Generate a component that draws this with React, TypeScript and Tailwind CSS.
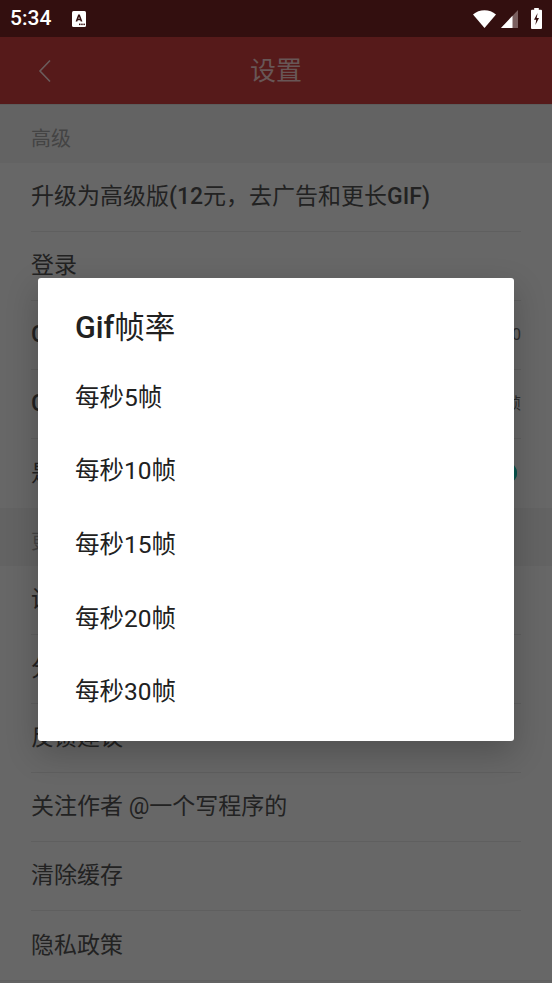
import React from 'react';

const FONT = "font-['Roboto','Noto_Sans_CJK_SC',sans-serif]";

// Rows of the settings page behind the dialog
function Row({ label, value, last, toggle }: { label: React.ReactNode; value?: string; last?: boolean; toggle?: boolean }) {
  return (
    <div className={`mx-[31px] h-[69px] flex items-center justify-between pb-[1px] ${last ? '' : 'border-b border-[#5f5f5f]'}`}>
      <span className="text-[23px] leading-none text-[#222222]">{label}</span>
      {value && <span className="text-[16px] text-[#2c2c2c]">{value}</span>}
      {toggle && (
        <span className="relative w-[44px] h-[20px] rounded-full bg-[#0a4d48] mr-[4px]">
          <span className="absolute right-0 top-[-1px] w-[22px] h-[22px] rounded-full bg-[#06544d]" />
        </span>
      )}
    </div>
  );
}

function SectionTitle({ label }: { label: string }) {
  return (
    <div className="h-[58px] bg-[#636363] pl-[31px] pt-[23px] pb-[13px] flex items-center">
      <span className="text-[20px] leading-none text-[#444444]">{label}</span>
    </div>
  );
}

function StatusBar() {
  return (
    <div className="h-[37px] bg-[#330f0f] flex items-center justify-between pl-[10px] pr-[10px]">
      <div className="flex items-center">
        <span className="text-[21px] leading-none font-medium text-white">5:34</span>
        <svg width="14" height="16" viewBox="0 0 14 16" className="ml-[21px]">
          <rect x="0" y="0" width="14" height="16" rx="1.5" fill="#fff" />
          <path d="M3.6 10.6 L6.2 3.4 H7.8 L10.4 10.6 H8.7 L8.2 9.2 H5.8 L5.3 10.6 Z M6.3 7.8 H7.7 L7 5.7 Z" fill="#330f0f" />
          <rect x="7" y="12.6" width="1.5" height="1.5" fill="#330f0f" />
          <rect x="9.2" y="12.6" width="1.5" height="1.5" fill="#330f0f" />
          <rect x="11.4" y="12.6" width="1.5" height="1.5" fill="#330f0f" />
        </svg>
      </div>
      <div className="flex items-center">
        <svg width="23" height="18" viewBox="0 0 23 18">
          <path d="M0 4.6 C6.2 -1.2 16.8 -1.2 23 4.6 L11.5 18 Z" fill="#fff" />
        </svg>
        <svg width="17" height="18" viewBox="0 0 17 18" className="ml-[5px]">
          <path d="M17 0 V18 H0 Z" fill="#7a5f5f" />
          <path d="M11.5 5.8 V18 H0 Z" fill="#fff" />
        </svg>
        <svg width="11" height="21" viewBox="0 0 11 21" className="ml-[13px]">
          <path d="M3.2 0 H7.8 V1.8 H10 A1 1 0 0 1 11 2.8 V20 A1 1 0 0 1 10 21 H1 A1 1 0 0 1 0 20 V2.8 A1 1 0 0 1 1 1.8 H3.2 Z" fill="#fff" />
          <path d="M6.6 5 L3 11.7 H5.2 L4.4 17 L8 10 H5.7 Z" fill="#330f0f" />
        </svg>
      </div>
    </div>
  );
}

export default function App() {
  const rates = ['每秒5帧', '每秒10帧', '每秒15帧', '每秒20帧', '每秒30帧'];

  return (
    <div className={`relative w-[552px] h-[983px] overflow-hidden bg-[#676767] ${FONT}`}>
      <StatusBar />

      <div className="h-[67px] bg-[#561a1a] relative flex items-center justify-center">
        <svg width="14" height="24" viewBox="0 0 14 24" className="absolute left-[38px] top-[22px]" fill="none">
          <path d="M12 1.5 L2 12 L12 22.5" stroke="#6b5c5c" strokeWidth="1.6" />
        </svg>
        <span className="text-[26px] leading-none text-[#685656]">设置</span>
      </div>
      <div className="h-[1px] bg-[#5c5c5c]" />

      <SectionTitle label="高级" />
      <Row label={<>升级为高级版<span className="font-medium">(12</span>元，去广告和更长<span className="font-medium">GIF)</span></>} />
      <Row label="登录" />
      <Row label={<><span className="font-medium">Gif</span>最大尺寸</>} value="320" />
      <Row label={<><span className="font-medium">Gif</span>帧率</>} value="每秒10帧" />
      <Row label="是否添加水印" toggle last />

      <SectionTitle label="更多" />
      <Row label="设置" />
      <Row label="分享给好友" />
      <Row label="反馈建议" />
      <Row label="关注作者 @一个写程序的" />
      <Row label="清除缓存" />
      <Row label="隐私政策" last />
      <div className="h-[1px] bg-[#606060]" />
      <div className="h-[4px] bg-[#636363]" />

      {/* dialog */}
      <div className="absolute left-[38px] top-[278px] w-[476px] h-[463px] bg-white rounded-[3px] shadow-[0_12px_32px_rgba(0,0,0,0.22)] pl-[37px]">
        <div className="h-[83px] pt-[32px]">
          <span className="text-[30.5px] leading-[36px] text-[#212121] block">
            <span className="font-medium">Gif</span>帧率
          </span>
        </div>
        {rates.map((r) => (
          <div key={r} className="h-[73.7px] flex items-center">
            <span className="text-[24.5px] leading-none text-[#212121]">{r}</span>
          </div>
        ))}
      </div>
    </div>
  );
}
